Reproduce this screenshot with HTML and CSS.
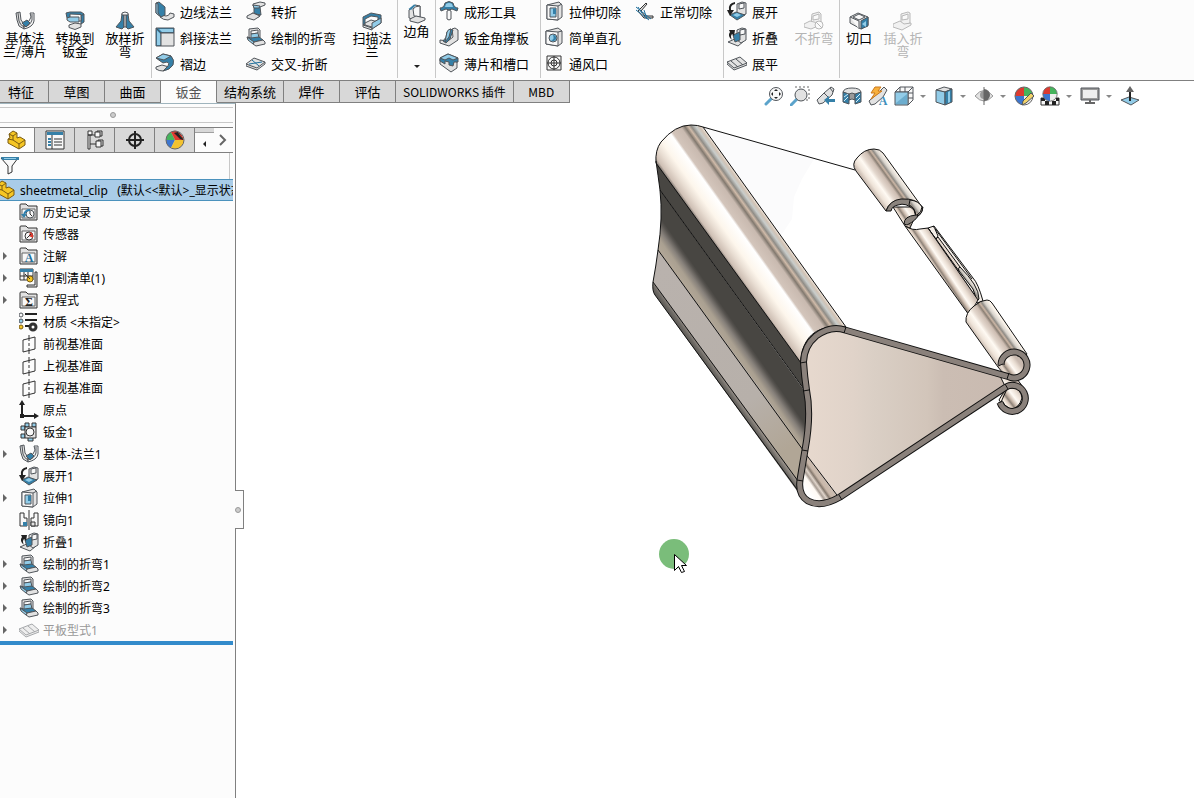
FILE: index.html
```html
<!doctype html>
<html lang="zh-CN">
<head>
    <meta charset="UTF-8">
    <title>sheetmetal_clip</title>
    <link rel="stylesheet" href="styles.css">
</head>
<body>
    <!-- icon sprite -->
    <svg class="sprite" aria-hidden="true">
        <symbol id="base" viewBox="0 0 20 20">
            <path class="o g" d="m1 2 4-1 1 8 3 4v5l-5-3-2-6z"/>
            <path class="o w" d="M15 2h4v8q-1 6-10 8v-5l5-3 2-4z"/>
            <path class="o n" d="m3 2 1 8q1 4 5 6 6-1 8-7V3"/>
            <path class="o b" d="m7 12 5-3 3 3-4 4z"/>
        </symbol>
        <symbol id="convert" viewBox="0 0 20 20">
            <path class="o b" d="m1 2 4-1h11l3 2v8l-3 2V6H5l-3 1z"/>
            <path class="o w" d="m5 3 11 .5V10H5zM16 5l3-2"/>
            <path class="o l" d="M5 6h9v5H5L2 9V7z"/>
            <path class="o g" d="m4 14 6-2 6 1v3l-6 2.500-6-2z"/>
        </symbol>
        <symbol id="loft" viewBox="0 0 20 20">
            <path class="o b" d="m7 3-1 7-5 6 6 2 2-2V3zM11 3h2l1 7 5 6-6 2-2-2z"/>
            <path class="o g" d="M9 3h2v13H9z"/>
            <path class="o w" d="m7 2 3-1 3 1v2H7z"/>
        </symbol>
        <symbol id="edge" viewBox="0 0 20 20">
            <path class="o g" d="m7 14 4 1q3 0 4-3l4 1v3l-6 3q-5 0-8-3z"/>
            <path class="o b" d="m1 2 3-1 6 5v8l-4 2-5-4z"/>
            <path class="o l" d="m1 2 2 1v9l3 4-5-4z"/>
        </symbol>
        <symbol id="miter" viewBox="0 0 20 20">
            <path class="o b" d="M1 1h18v5H6v13H1z"/>
            <path class="l" d="M2 3.500 5.500 7v11H2zM4 2h14v3H7z"/>
            <path class="o g" d="M6 6h13v13H6z"/>
            <path class="o n" d="m1 1 5 5"/>
        </symbol>
        <symbol id="hem" viewBox="0 0 20 20">
            <path class="o g" d="m1 14 6-2 7 2-6 4q-4 0-7-2z"/>
            <path class="o b" d="M1 5 8 1l8 2q4 4 2 9-3 5-10 6l5-5q2-3-1-4l-4 1z"/>
            <path class="o l" d="m1 5 7-4 8 2-7 4z"/>
        </symbol>
        <symbol id="jog" viewBox="0 0 20 20">
            <path class="o g" d="m7 3 7-2 5 1v2l-5 2-7-1z"/>
            <path class="o b" d="m8 5 6 1 1 8-7-1z"/>
            <path class="o l" d="m7 4 7 1-1 2H8zM6 12l8 2-1 2-7-2z"/>
            <path class="o g" d="m1 15 6-3 7 3-6 4-7-2z"/>
        </symbol>
        <symbol id="sketchbend" viewBox="0 0 20 20">
            <path class="o g" d="m3 2 9-1 2 2v8l-9 1-2-2z"/>
            <path class="o w" d="m5 4 7-1v3l-7 1z"/>
            <path class="o l" d="m5 7 7-1 1 5-8 1z"/>
            <path class="o b" d="m1 10 4 1 8-1 4 3-9 2z"/>
            <path class="o g" d="m8 15 9-2 2 2v2l-9 2-3-2z"/>
            <path class="o l" d="m1 10 7 5-1 2-5-4z"/>
        </symbol>
        <symbol id="cross" viewBox="0 0 20 20">
            <path class="o g" d="m0 11 8-6 11 4v2l-8 6-11-4z"/>
            <path class="o n" d="m0 11 11 4 8-6"/>
            <path class="sb n" d="m6 7 7 6M3 11l13-2"/>
        </symbol>
        <symbol id="swept" viewBox="0 0 20 20">
            <path class="o b" d="M1 6 9 2l10 2v8l-8 5-1-5 6-3V6L9 5 3 8v5L1 14z"/>
            <path class="o g" d="m3 12 6-3 7 2-6 5-7-2zM1 14l9 3v2l-9-3z"/>
            <path class="o l" d="m10 12 9-5v5l-9 6z"/>
        </symbol>
        <symbol id="corner" viewBox="0 0 20 20">
            <path class="o g" d="m2 6 6-5 5 1v11l-5 3-6-2z"/>
            <path class="o w" d="M6 5q2-3 7-3v11l-6-1z"/>
            <path class="b" d="M1.500 5 7 .5l2 .5-5 5z"/>
            <path class="o g" d="m3 15 6-3 9 2v2l-7 3-8-2z"/>
        </symbol>
        <symbol id="form" viewBox="0 0 20 20">
            <path class="o b" d="M1 7q4 0 5-5 4-3 8 0 1 5 5 5l-1 3-5-2-3 1-3-1-5 2z"/>
            <path class="l" d="M7 3q3-2 6 0l1 3H6z"/>
            <path class="o w" d="M8 10q2-2 4 0v8q-2 2-4 0z"/>
        </symbol>
        <symbol id="gusset" viewBox="0 0 20 20">
            <path class="o g" d="m13 2 3-1 3 2v10l-9 6-9-3v-3l8 1 5-4z"/>
            <path class="o b" d="M4 14q4-3 4-9l3-3 3 1-3 9-4 4z"/>
            <path class="o l" d="M8 5q1-3 4-3l-2 8-4 5z"/>
        </symbol>
        <symbol id="tabslot" viewBox="0 0 20 20">
            <path class="o g" d="M1 6v5l11 8 6-4V9L7 4z"/>
            <path class="o b" d="m1 5 8-4 10 4v4h-4l-1 4-4-1V9L6 8v3l-5-3z"/>
            <path class="o l" d="m1 5 8-4 10 4-5 2-4-2-4 2z"/>
        </symbol>
        <symbol id="extrude" viewBox="0 0 20 20">
            <path class="o g" d="m3 4 12-3 3 3v12l-4 3-11-1z"/>
            <path class="o w" d="m3 4 11 1v14L3 18zM14 5l4-2"/>
            <path class="o l" d="M6 7h6v9H6z"/>
            <path class="b" d="M9 7.500h3V13H9z"/>
        </symbol>
        <symbol id="hole" viewBox="0 0 20 20">
            <path class="o g" d="m2 4 12-3 4 3v12l-4 3-12-2z"/>
            <path class="o w" d="m2 4 12 1v14L2 17zM14 5l4-1"/>
            <circle class="o l" cx="9" cy="11" r="4"/>
            <path class="b" d="M9 8a3 3 0 1 1-2 5q4 0 2-5z"/>
        </symbol>
        <symbol id="vent" viewBox="0 0 20 20">
            <path class="k w" d="M3 3h14v14H3z"/>
            <circle class="k n" cx="10" cy="10" r="6"/>
            <circle class="k n" cx="10" cy="10" r="3"/>
            <path class="k n" d="M3 10h14M10 3v14"/>
        </symbol>
        <symbol id="normal" viewBox="0 0 20 20">
            <path class="k g" d="m11 2 1 1-6 7 4 5h8v2H9l-6-7z"/>
            <path class="sb n" d="m1 6 15 12M1 9l13 10M3 6l4 6M9 9l3 9"/>
        </symbol>
        <symbol id="unfold" viewBox="0 0 20 20">
            <path class="o g" d="m10 3 5-2 4 1v11l-5 2-4-3z"/>
            <path class="o w" d="m12 3 5-1v5l-5 1z"/>
            <path class="o b" d="m3 14 6-3 9 3-8 5z"/>
            <path class="l" d="m6 14 4-2 4 2-4 2z"/>
            <path class="f" d="M8 3Q3 4 4 9h3l-4 6-3-6h2Q1 2 8 1z"/>
        </symbol>
        <symbol id="fold" viewBox="0 0 20 20">
            <path class="o g" d="m1 15 9-4 7 3-6 5z"/>
            <path class="o g" d="m10 3 5-2 4 1v11l-5 3-4-3z"/>
            <path class="o b" d="m6 8 7-3v8l-5 2z"/>
            <path class="o w" d="m13 3 5-1v5l-5 1z"/>
            <path class="f" d="M2 3h6l-1 6-2-2q-2 2 0 6-5-4-2-8z"/>
        </symbol>
        <symbol id="flatten" viewBox="0 0 20 20">
            <path class="o g" d="m0 9 13-5 7 6v2L7 17l-7-6z"/>
            <path class="o n" d="m0 9 7 6 13-5M4 8l7 6M9 6l7 6"/>
        </symbol>
        <symbol id="nobend" viewBox="0 0 20 20">
            <path class="o g" d="m8 3 7-2 2 2v8l-4 3-6-1z"/>
            <path class="o w" d="m9 5 6-2v5l-6 1z"/>
            <path class="o g" d="m0 13 6-3 8 2v3l-7 3-7-2z"/>
            <circle class="o w" cx="15" cy="14" r="4"/>
            <path class="o n" d="m12 11 6 6"/>
        </symbol>
        <symbol id="rip" viewBox="0 0 20 20">
            <path class="o g" d="m1 6 8-4 10 4v8l-7 4-11-6z"/>
            <path class="o w" d="m4 6 6-3 6 3-6 3zM1 6l9 4v8"/>
            <path class="o b" d="m12 10 7-4v9l-7 3z"/>
            <path class="l" d="m13 13 4-3v6z"/>
        </symbol>
        <symbol id="insert" viewBox="0 0 20 20">
            <path class="o g" d="m8 3 7-2 2 1v10l-5 2-4-2z"/>
            <path class="o w" d="m9 5 6-2v5l-6 1z"/>
            <path class="o g" d="m0 13 7-3 4 3 7-1v2l-9 5-9-3z"/>
        </symbol>
        <symbol id="part" viewBox="0 0 20 20">
            <path class="gold" d="m2 4 4-3 4 2v5l3-1 5 3v5l-6 4L1 13V9l2-1z"/>
            <path class="goldline" d="m2 4 4 2 4-3M6 6v4l-5-1M6 10l6 4 6-4M12 14v5"/>
        </symbol>
        <symbol id="props" viewBox="0 0 20 20">
            <path class="k w" d="M1 1h18v18H1z"/>
            <path class="b" d="M2 2h16v3H2z"/>
            <path class="k n" d="M7 5v14M9 9h8M9 12h8M9 15h8"/>
            <path class="b" d="M3 8h3v2H3zM3 11h3v2H3zM3 14h3v2H3z"/>
        </symbol>
        <symbol id="config" viewBox="0 0 20 20">
            <path class="k w" d="M3 1h4v4H3zM3 5h2v14H3zM10 2h5v5h-5zM11 11h5v6h-5z"/>
            <path class="k n" d="M5 5h5M5 14h6M12 2V1h5v5h-2M13 11v-1h5v6h-2"/>
        </symbol>
        <symbol id="dim" viewBox="0 0 20 20">
            <circle class="k2 n" cx="10" cy="10" r="6"/>
            <path class="k2 n" d="M1 10h18M10 1v18"/>
        </symbol>
        <symbol id="ball" viewBox="0 0 20 20">
            <path class="red" d="M10 10V1a9 9 0 0 0-9 9z"/>
            <path class="green" d="M10 10V1a9 9 0 0 1 9 9z"/>
            <path class="blue" d="M10 10H1a9 9 0 0 0 9 9z"/>
            <path class="paper" d="M10 10h9a9 9 0 0 1-9 9z"/>
            <circle class="thin n" cx="10" cy="10" r="9"/>
        </symbol>
        <symbol id="appear" viewBox="0 0 20 20">
            <path class="green" d="M10 10 6 2a9 9 0 0 0-5 8z"/>
            <path class="red" d="M10 10 6 2q3-2 6-1l7 9z"/>
            <path class="f" d="m9 3 4-1q5 3 5 8l-3-1z"/>
            <path class="red" d="m13 3 5 6q0-4-5-6z"/>
            <path class="blue" d="M10 10H1a9 9 0 0 0 5 8z"/>
            <path class="yellow" d="M10 10h9a9 9 0 0 1-13 8z"/>
            <circle class="thin n" cx="10" cy="10" r="9"/>
        </symbol>
        <symbol id="funnel" viewBox="0 0 20 20">
            <path class="k w" d="m1 2 7 8v8l4-2v-6l6-8z"/>
            <path class="b" d="M1 1h18v3H2z"/>
            <path class="l" d="M4 2h12v1H4z"/>
        </symbol>
        <symbol id="folder" viewBox="0 0 20 20">
            <path class="k g" d="M1 3q0-1 1-1h5l2 2h9v14H1z"/>
            <path class="thin w" d="M3 7h13v9H3z"/>
        </symbol>
        <symbol id="history" viewBox="0 0 20 20">
            <use href="#folder"/>
            <circle class="o w" cx="11" cy="12" r="4"/>
            <path class="k n" d="M11 9v3l2 2"/>
            <path class="sb2 n" d="M5 13q1-5 6-5"/>
            <path class="b" d="M2 12h6l-3 4z"/>
        </symbol>
        <symbol id="sensor" viewBox="0 0 20 20">
            <use href="#folder"/>
            <circle class="k w" cx="10" cy="12" r="4"/>
            <path class="red" d="m10 12 1-4q4 1 3 6z"/>
            <path class="k n" d="m8 14 4-4"/>
        </symbol>
        <symbol id="cutlist" viewBox="0 0 20 20">
            <path class="k w" d="M1 1h13v11H1z"/>
            <path class="b" d="M1 1h13v3H1z"/>
            <path class="k n" d="M1 8h13M5 4v8M9 4v8"/>
            <path class="k g" d="M16 4h2v15H8v-2h8z"/>
            <circle class="gold" cx="11" cy="11" r="3"/>
            <path class="k n" d="m6 6 5 5"/>
        </symbol>
        <symbol id="material" viewBox="0 0 20 20">
            <circle class="o w" cx="2" cy="3" r="2"/>
            <circle class="o l" cx="2" cy="9" r="2"/>
            <circle class="gold" cx="2" cy="15" r="2"/>
            <path class="k2 n" d="M6 2h12M6 8h12M6 14h4"/>
            <circle class="gear" cx="14" cy="15" r="3"/>
        </symbol>
        <symbol id="plane" viewBox="0 0 20 20">
            <path class="k n" d="m4 6 12-3v12L4 18zM10 1v6M10 9v3M10 14v6"/>
        </symbol>
        <symbol id="origin" viewBox="0 0 20 20">
            <path class="k2 n" d="M3 3v13h13"/>
            <path class="f" d="m3 0 3 5H0zM20 16l-5-3v6zM1 14h4v4H1z"/>
        </symbol>
        <symbol id="sheet" viewBox="0 0 20 20">
            <path class="k l" d="M2 4h4v4H2zM6 1h4v4H6zM13 1h4v4h-4zM2 12h4v4H2zM9 15h5v4H9z"/>
            <path class="k g" d="M6 5h11v11H6z"/>
            <circle class="k w" cx="11" cy="10" r="4"/>
        </symbol>
        <symbol id="mirror" viewBox="0 0 20 20">
            <path class="k w" d="M1 3h4v5h3v8H1zM19 3h-4v5h-3v8h7z"/>
            <path class="b" d="M4 12h4v4H4z"/>
            <path class="k g" d="M12 12h4v4h-4z"/>
            <path class="k n" d="M10 0v20"/>
        </symbol>
        <symbol id="zoomfit" viewBox="0 0 20 20">
            <path class="handle" d="m2 18 6-6"/>
            <circle class="o w" cx="12" cy="8" r="6.500"/>
            <path class="f" d="m12 3 2 2h-4zM12 13l2-2h-4zM7 8l2-2v4zM17 8l-2-2v4z"/>
        </symbol>
        <symbol id="zoomarea" viewBox="0 0 20 20">
            <path class="dash n" d="M5 1h14v13H7"/>
            <path class="handle" d="m1 19 6-6"/>
            <circle class="o g" cx="11" cy="9" r="6"/>
        </symbol>
        <symbol id="previous" viewBox="0 0 20 20">
            <path class="o g" d="m1 14 7-7 7-6 3 2-2 6-9 8-4 1z"/>
            <path class="o n" d="m8 7 5 5M14 2l3 4"/>
            <path class="b" d="m8 14 5-4v3h6v3h-6v3z"/>
        </symbol>
        <symbol id="section" viewBox="0 0 20 20">
            <path class="o g" d="M1 6q1-4 9-4 8 0 9 4l-6 3q-3-2-6 0z"/>
            <path class="o gr" d="M7 8q3-2 6 0v6q-3-2-6 0z"/>
            <path class="o b" d="m1 6 6 2v10l-6-2zM13 8l6-2v10l-6 2z"/>
            <path class="hatch n" d="m2 11 4-3M2 15l4-4M14 12l4-4M14 16l4-4"/>
        </symbol>
        <symbol id="annot" viewBox="0 0 20 20">
            <path class="o g" d="m1 15 10-9 5-5 3 3-4 7-8 7-4 1z"/>
            <path class="bolt" d="m7 1 6 0-3 4h4l-11 8 4-6H3z"/>
        </symbol>
        <symbol id="orient" viewBox="0 0 20 20">
            <path class="o w" d="m6 1h13v13l-5 5V6H1z"/>
            <path class="o n" d="M6 1v5M11 1v5M19 7h-5M14 6l5-5M14 12h5"/>
            <path class="o l" d="M1 6h13v13H1z"/>
            <path class="b" d="M2 17 13 8v10H2z" opacity=".4"/>
        </symbol>
        <symbol id="display" viewBox="0 0 20 20">
            <path class="o g" d="m2 4 8-3 8 2-7 3z"/>
            <path class="o l" d="m2 4 9 2v13l-9-3z"/>
            <path class="o b" d="m11 6 7-3v13l-7 3z"/>
            <path class="l" d="m14 6 2-1v11l-2 1z"/>
        </symbol>
        <symbol id="eye" viewBox="0 0 20 20">
            <path class="eye" d="M1 10q9-11 18 0-9 10-18 0z"/>
            <circle class="gr" cx="10" cy="9" r="4"/>
            <path class="dk" d="M10 3a6 6 0 0 1 0 12z"/>
            <path class="thin" d="M10 1v18"/>
        </symbol>
        <symbol id="pencilball" viewBox="0 0 20 20">
            <use href="#ball"/>
            <path class="o pencil" d="m9 15 8-8 3 3-8 7-4 2z"/>
        </symbol>
        <symbol id="scene" viewBox="0 0 20 20">
            <path class="k w" d="M1 12h18v7H1z"/>
            <path class="f" d="M1 12h4v3H1zM5 15h4v4H5zM9 12h3v3H9zM12 15h4v4h-4zM16 12h3v3h-3z"/>
            <g transform="translate(2) scale(.8)"><use href="#ball" width="20" height="20"/></g>
        </symbol>
        <symbol id="monitor" viewBox="0 0 20 20">
            <path class="o gr" d="M1 2h18v12H1z"/>
            <path class="paper" d="M3 4h14v8H3z"/>
            <path class="dk" d="M9 14h2v2h4v2H5v-2h4z"/>
        </symbol>
        <symbol id="triad" viewBox="0 0 20 20">
            <path class="o l" d="m1 14 8-3 10 3-8 5z"/>
            <path class="k2 n" d="M10 15V4"/>
            <path class="dk" d="m10 0 4 6H6z"/>
        </symbol>
    </svg>

    <header class="ribbon">
        <div class="group first">
            <button class="big"><svg class="icon"><use href="#base"/></svg>基体法<br>兰/薄片</button>
            <button class="big"><svg class="icon"><use href="#convert"/></svg>转换到<br>钣金</button>
            <button class="big"><svg class="icon"><use href="#loft"/></svg>放样折<br>弯</button>
        </div>
        <div class="group">
            <div class="column">
                <button class="small"><svg class="icon"><use href="#edge"/></svg>边线法兰</button>
                <button class="small"><svg class="icon"><use href="#miter"/></svg>斜接法兰</button>
                <button class="small"><svg class="icon"><use href="#hem"/></svg>褶边</button>
            </div>
            <div class="column">
                <button class="small"><svg class="icon"><use href="#jog"/></svg>转折</button>
                <button class="small"><svg class="icon"><use href="#sketchbend"/></svg>绘制的折弯</button>
                <button class="small"><svg class="icon"><use href="#cross"/></svg>交叉-折断</button>
            </div>
            <button class="big"><svg class="icon"><use href="#swept"/></svg>扫描法<br>兰</button>
        </div>
        <div class="group">
            <button class="big menu"><svg class="icon"><use href="#corner"/></svg>边角<span class="caret"></span></button>
        </div>
        <div class="group">
            <div class="column">
                <button class="small"><svg class="icon"><use href="#form"/></svg>成形工具</button>
                <button class="small"><svg class="icon"><use href="#gusset"/></svg>钣金角撑板</button>
                <button class="small"><svg class="icon"><use href="#tabslot"/></svg>薄片和槽口</button>
            </div>
        </div>
        <div class="group">
            <div class="column">
                <button class="small"><svg class="icon"><use href="#extrude"/></svg>拉伸切除</button>
                <button class="small"><svg class="icon"><use href="#hole"/></svg>简单直孔</button>
                <button class="small"><svg class="icon"><use href="#vent"/></svg>通风口</button>
            </div>
            <div class="column">
                <button class="small"><svg class="icon"><use href="#normal"/></svg>正常切除</button>
            </div>
        </div>
        <div class="group">
            <div class="column">
                <button class="small"><svg class="icon"><use href="#unfold"/></svg>展开</button>
                <button class="small"><svg class="icon"><use href="#fold"/></svg>折叠</button>
                <button class="small"><svg class="icon"><use href="#flatten"/></svg>展平</button>
            </div>
            <button class="big" disabled><svg class="icon"><use href="#nobend"/></svg>不折弯</button>
        </div>
        <div class="group last">
            <button class="big narrow"><svg class="icon"><use href="#rip"/></svg>切口</button>
            <button class="big" disabled><svg class="icon"><use href="#insert"/></svg>插入折<br>弯</button>
        </div>
    </header>

    <div class="tabrow">
        <nav class="tabs">
            <button class="tab first">特征</button>
            <button class="tab">草图</button>
            <button class="tab">曲面</button>
            <button class="tab active">钣金</button>
            <button class="tab tight">结构系统</button>
            <button class="tab">焊件</button>
            <button class="tab">评估</button>
            <button class="tab tight latin">SOLIDWORKS 插件</button>
            <button class="tab latin">MBD</button>
        </nav>
        <div class="viewbar">
            <button aria-label="整屏显示全图"><svg class="icon"><use href="#zoomfit"/></svg></button>
            <button aria-label="局部放大"><svg class="icon"><use href="#zoomarea"/></svg></button>
            <button aria-label="上一视图"><svg class="icon"><use href="#previous"/></svg></button>
            <button aria-label="剖面视图"><svg class="icon"><use href="#section"/></svg></button>
            <button aria-label="动态注解视图"><svg class="icon" viewBox="0 0 20 20"><use href="#annot"/><text class="glyph-v" x="15" y="19">A</text></svg></button>
            <button aria-label="视图定向"><svg class="icon"><use href="#orient"/></svg></button>
            <span class="drop"></span>
            <button aria-label="显示样式"><svg class="icon"><use href="#display"/></svg></button>
            <span class="drop"></span>
            <button aria-label="隐藏/显示项目"><svg class="icon"><use href="#eye"/></svg></button>
            <span class="drop"></span>
            <button aria-label="编辑外观"><svg class="icon"><use href="#pencilball"/></svg></button>
            <button aria-label="应用布景"><svg class="icon"><use href="#scene"/></svg></button>
            <span class="drop"></span>
            <button aria-label="视图设定"><svg class="icon"><use href="#monitor"/></svg></button>
            <span class="drop"></span>
            <button aria-label="三重轴"><svg class="icon"><use href="#triad"/></svg></button>
        </div>
    </div>

    <main class="workspace">
        <aside class="sidebar">
            <div class="grip"><span class="dot"></span></div>
            <div class="paneltabs">
                <button class="active" aria-label="设计树"><svg class="icon"><use href="#part"/></svg></button>
                <button aria-label="属性"><svg class="icon"><use href="#props"/></svg></button>
                <button aria-label="配置"><svg class="icon"><use href="#config"/></svg></button>
                <button aria-label="尺寸"><svg class="icon"><use href="#dim"/></svg></button>
                <button aria-label="外观"><svg class="icon"><use href="#appear"/></svg></button>
                <div class="scroller">
                    <button class="prev" aria-label="向左"><svg viewBox="0 0 16 16"><path class="f" d="M10 5v6L7 8z"/></svg></button>
                    <button class="next" aria-label="更多"><svg viewBox="0 0 16 16"><path class="chevron" d="m5 3 5 5-5 5"/></svg></button>
                </div>
            </div>
            <label class="filter"><svg class="icon"><use href="#funnel"/></svg><input type="text" aria-label="过滤"></label>
            <ul class="tree">
                <li class="root"><svg class="icon"><use href="#part"/></svg><span>sheetmetal_clip&nbsp;&nbsp; (默认&lt;&lt;默认&gt;_显示状态 1&gt;)</span></li>
                <li><svg class="icon"><use href="#history"/></svg>历史记录</li>
                <li><svg class="icon"><use href="#sensor"/></svg>传感器</li>
                <li><button class="toggle" aria-label="展开项"></button><svg class="icon" viewBox="0 0 20 20"><use href="#folder"/><text class="glyph-a" x="10" y="16">A</text></svg>注解</li>
                <li><button class="toggle" aria-label="展开项"></button><svg class="icon"><use href="#cutlist"/></svg>切割清单(1)</li>
                <li><button class="toggle" aria-label="展开项"></button><svg class="icon" viewBox="0 0 20 20"><use href="#folder"/><text class="glyph-s" x="10" y="16">Σ</text></svg>方程式</li>
                <li><svg class="icon"><use href="#material"/></svg>材质 &lt;未指定&gt;</li>
                <li><svg class="icon"><use href="#plane"/></svg>前视基准面</li>
                <li><svg class="icon"><use href="#plane"/></svg>上视基准面</li>
                <li><svg class="icon"><use href="#plane"/></svg>右视基准面</li>
                <li><svg class="icon"><use href="#origin"/></svg>原点</li>
                <li><svg class="icon"><use href="#sheet"/></svg>钣金1</li>
                <li><button class="toggle" aria-label="展开项"></button><svg class="icon"><use href="#base"/></svg>基体-法兰1</li>
                <li><svg class="icon"><use href="#unfold"/></svg>展开1</li>
                <li><button class="toggle" aria-label="展开项"></button><svg class="icon"><use href="#extrude"/></svg>拉伸1</li>
                <li><svg class="icon"><use href="#mirror"/></svg>镜向1</li>
                <li><svg class="icon"><use href="#fold"/></svg>折叠1</li>
                <li><button class="toggle" aria-label="展开项"></button><svg class="icon"><use href="#sketchbend"/></svg>绘制的折弯1</li>
                <li><button class="toggle" aria-label="展开项"></button><svg class="icon"><use href="#sketchbend"/></svg>绘制的折弯2</li>
                <li><button class="toggle" aria-label="展开项"></button><svg class="icon"><use href="#sketchbend"/></svg>绘制的折弯3</li>
                <li class="off"><button class="toggle" aria-label="展开项"></button><svg class="icon"><use href="#flatten"/></svg>平板型式1</li>
            </ul>
            <div class="rollback"></div>
            <button class="collapse" aria-label="折叠面板"><span class="dot"></span></button>
        </aside>

        <section class="viewport">
            <svg class="model" viewBox="236 103 958 695">
                <defs>
                    <linearGradient id="metal" gradientUnits="userSpaceOnUse" x1="656" y1="163" x2="705" y2="128">
                        <stop offset="0" stop-color="#77706a"/>
                        <stop offset=".05" stop-color="#cfc0b5"/>
                        <stop offset=".16" stop-color="#e8ddd2"/>
                        <stop offset=".28" stop-color="#fdf6ec"/>
                        <stop offset=".48" stop-color="#ffffff"/>
                        <stop offset=".52" stop-color="#d3c5bb"/>
                        <stop offset=".68" stop-color="#c9bab0"/>
                        <stop offset=".74" stop-color="#82796f"/>
                        <stop offset=".79" stop-color="#d0bba9"/>
                        <stop offset=".83" stop-color="#8f8c86"/>
                        <stop offset=".89" stop-color="#c8ccca"/>
                        <stop offset=".94" stop-color="#d1c2b4"/>
                        <stop offset="1" stop-color="#fff8ef"/>
                    </linearGradient>
                    <linearGradient id="pin" gradientUnits="userSpaceOnUse" x1="855" y1="167" x2="880" y2="149">
                        <stop offset="0" stop-color="#cdbfb4"/>
                        <stop offset=".12" stop-color="#eee3d8"/>
                        <stop offset=".3" stop-color="#fffaf3"/>
                        <stop offset=".42" stop-color="#e3d7cd"/>
                        <stop offset=".58" stop-color="#cdbdb2"/>
                        <stop offset=".66" stop-color="#8b8075"/>
                        <stop offset=".72" stop-color="#cbb6a5"/>
                        <stop offset=".78" stop-color="#8f8b85"/>
                        <stop offset=".86" stop-color="#d8d3cc"/>
                        <stop offset="1" stop-color="#fff8ef"/>
                    </linearGradient>
                    <linearGradient id="pin2" href="#pin" x1="966" y1="322" x2="991" y2="304"/>
                    <linearGradient id="rod" gradientUnits="userSpaceOnUse" x1="905" y1="226" x2="920" y2="216">
                        <stop offset="0" stop-color="#fff6ea"/>
                        <stop offset=".15" stop-color="#d9c9bc"/>
                        <stop offset=".25" stop-color="#8d8278"/>
                        <stop offset=".36" stop-color="#c9b8aa"/>
                        <stop offset=".55" stop-color="#fffaf4"/>
                        <stop offset=".8" stop-color="#e9ddd2"/>
                        <stop offset="1" stop-color="#c9bab0"/>
                    </linearGradient>
                    <linearGradient id="rod2" href="#rod" x1="1003" y1="372" x2="1018" y2="361"/>
                    <linearGradient id="rod3" href="#rod" x1="1004" y1="402" x2="1020" y2="390"/>
                    <linearGradient id="inner" gradientUnits="userSpaceOnUse" x1="803" y1="486" x2="823" y2="472">
                        <stop offset="0" stop-color="#ffffff"/>
                        <stop offset=".3" stop-color="#fffaf4"/>
                        <stop offset=".4" stop-color="#a79c93"/>
                        <stop offset=".5" stop-color="#e0d5cb"/>
                        <stop offset=".6" stop-color="#85796e"/>
                        <stop offset=".7" stop-color="#c9b8aa"/>
                        <stop offset="1" stop-color="#cfc2b8"/>
                    </linearGradient>
                    <linearGradient id="bend" gradientUnits="userSpaceOnUse" x1="658" y1="250" x2="688" y2="229">
                        <stop offset="0" stop-color="#b3a898"/>
                        <stop offset=".2" stop-color="#aaa091"/>
                        <stop offset=".35" stop-color="#86807a"/>
                        <stop offset=".5" stop-color="#55524e"/>
                        <stop offset=".56" stop-color="#484642"/>
                    </linearGradient>
                    <linearGradient id="plate" gradientUnits="userSpaceOnUse" x1="660" y1="270" x2="800" y2="470">
                        <stop offset="0" stop-color="#b9b2ad"/>
                        <stop offset=".65" stop-color="#b7b0aa"/>
                        <stop offset=".9" stop-color="#b1a696"/>
                    </linearGradient>
                    <linearGradient id="foot" gradientUnits="userSpaceOnUse" x1="653" y1="293" x2="660" y2="288">
                        <stop offset="0" stop-color="#55534f"/>
                        <stop offset=".5" stop-color="#6f6b66"/>
                        <stop offset="1" stop-color="#a39b93"/>
                    </linearGradient>
                    <linearGradient id="face" x1="0" y1="0" x2="1" y2="0">
                        <stop offset="0" stop-color="#e7d9ce"/>
                        <stop offset=".24" stop-color="#e0d3c9"/>
                        <stop offset=".34" stop-color="#dacfc5"/>
                        <stop offset=".6" stop-color="#d2c5ba"/>
                        <stop offset=".68" stop-color="#cbbdb3"/>
                        <stop offset="1" stop-color="#c9bab0"/>
                    </linearGradient>
                </defs>

                <!-- top plate -->
                <path fill="#fbfbfc" d="m704 127 110 32-12 20-8 18-2 22-12 18z"/>
                <path class="edge n" d="m703 127 152 43"/>

                <!-- left bends -->
                <path fill="#484642" d="M656 161q2 14 4 29l146 202-3-30z"/>
                <path fill="url(#bend)" d="M660 190q3 28-2 60l147 205 4-58z"/>
                <path fill="url(#plate)" d="M658 250q-2 16-5 32l146 201 6-33z"/>
                <path fill="url(#foot)" d="M653 282q-1 9 2 13l145 200-2-15z"/>
                <path class="edge n" d="m660 190 146 202M658 250l145 200M653 282l145 199M655 295l144 197"/>
                <path class="edge" fill="url(#metal)" d="M656 163q-1-13 5-21 14-17 30-17 7 0 12 2l143 200q-30-3-40 15-5 9-5 21z"/>
                <path class="edge n" d="M656 161q2 14 4 29 3 28-2 60-2 16-5 32-1 9 2 13"/>

                <!-- end face -->
                <path fill="url(#face)" d="m845 330 164 47v10L840 498 805 453l4-42-5-49q1-28 41-32z"/>
                <path class="edge" fill="url(#inner)" d="m805 453 35 46q-20 8-31 3-9-5-9-22z"/>

                <!-- hinge, back pin -->
                <path class="edge" fill="url(#rod)" d="M893 207h30q-1 8-9 12l-4 9-5-2z"/>
                <path class="edge" fill="url(#pin)" d="M886 211 856 171q-5-7 1-13 7-9 17-9 6 0 9 4l39 54q-10-9-22-7-11 1-14 11z"/>
                <path class="edge band" d="M886 211q4-11 15-12 16-1 21 8 2 6-6 10l-2-7q-8-8-16-5-6 1-7 6z"/>
                <path class="edge" fill="url(#pin)" d="m910 200-1 5q6 2 7 11 6-4 6-9-3-6-12-7z"/>
                <path class="edge band" d="M904 224q0-8 12-9h2q-1 5-11 10z"/>

                <!-- hinge, middle -->
                <path class="edge" fill="#f4eee8" d="m928 228 6-2 39 52q5 5 10 23l-6 2-2-7z"/>
                <path class="edge" fill="#e6d9ce" d="m936 239 2-2 22 30-1 4z"/>
                <path class="edge" fill="url(#pin2)" d="M959 271q-2-3 1-4 9 9 14 17 5 8 5 15l-2 2-4-12z"/>
                <path class="edge" fill="url(#rod)" d="M905 226q8 5 15 3l8-1 50 72-9 15z"/>
                <path class="edge n" d="m928 228 8 11 2-3-3-7M933 226l39 53"/>

                <!-- hinge, front pin -->
                <path class="edge" fill="url(#pin2)" d="M966 322q-1-9 8-16 7-6 13-6 3 0 5 3l35 51-20 24-9-11z"/>
                <circle fill="url(#rod2)" cx="1014" cy="365" r="12"/>
                <path class="edge" fill="url(#rod3)" d="m1000 376 17 3 6 8-8 20-10 1-6-8 7-12z"/>
                <path class="edge" fill="url(#rod3)" d="m1001 402 9 7q9 0 12-11-1-10-10-10l-5 1z"/>

                <!-- sheet thickness -->
                <path class="rim" d="M1001 365a13 13 0 1 1 7 11.500L845 330q-14-5-29 6-12 10-12.500 26 1 15 3 28 5 25-1.500 60l-5 30q-2 15 8 21 13 7 32-4l166-110a13 13 0 1 1-6 15.500"/>
                <path class="fillrim" d="M1001 365a13 13 0 1 1 7 11.500L845 330q-14-5-29 6-12 10-12.500 26 1 15 3 28 5 25-1.500 60l-5 30q-2 15 8 21 13 7 32-4l166-110a13 13 0 1 1-6 15.500"/>
                <path class="edge n" d="m846 327-2 6M800 363l6-1M803 391l6-1M802 450l6 1M797 480l6 1M839 495l3 5M1009 373l-2 6M1005 384l3 5M998 366l5-2M998 403l5-2"/>

                <!-- pointer -->
                <circle fill="#7abd7a" cx="674" cy="554" r="15"/>
                <path fill="#fff" stroke="#000" d="M674.500 554.500v16l4-4 3 6 3-1-3-6h5z"/>
            </svg>
        </section>
    </main>
</body>
</html>
```
FILE: styles.css
```css
* {
    box-sizing: border-box;
}

body {
    margin: 0;
    min-height: 100vh;
    display: flex;
    flex-direction: column;
    background-color: #ffffff;
    color: #000000;
    font-family: "Noto Sans CJK SC", sans-serif;
    font-size: 13px;
    line-height: 13px;
}

button {
    margin: 0;
    padding: 0;
    border: 0;
    background: none;
    color: inherit;
    font: inherit;
}

.sprite {
    position: absolute;
    width: 0;
    height: 0;
}

.icon {
    display: block;
    width: 20px;
    height: 20px;
    flex: none;
}

/* icon paints */
.o { stroke: #50555a; stroke-linejoin: round; }
.k { stroke: #333333; stroke-linejoin: round; }
.k2 { stroke: #222222; stroke-width: 2; }
.sb { stroke: #1f6f9c; }
.sb2 { stroke: #2f7fae; stroke-width: 2; }
.thin { stroke: #666666; }
.g { fill: #e2e2e2; }
.w { fill: #f8f8f8; }
.b { fill: #3580a8; }
.l { fill: #92cce8; }
.f { fill: #222222; }
.gr { fill: #9a9a9a; }
.dk { fill: #666666; }
.red { fill: #dc3b30; }
.green { fill: #45b45c; }
.blue { fill: #3d76cf; }
.yellow { fill: #f2c230; }
.paper { fill: #eeeeee; }
.pencil { fill: #f3d36a; }
.gold { fill: #f5c624; stroke: #7a5b12; stroke-linejoin: round; }
.goldline { fill: none; stroke: #7a5b12; }
.bolt { fill: #f8b03c; stroke: #c9781d; }
.handle { fill: none; stroke: #5ba3cb; stroke-width: 3; stroke-linecap: round; }
.dash { stroke: #666666; stroke-dasharray: 2 2; }
.hatch { stroke: #d6edf8; }
.eye { fill: #e2e2e2; stroke: #999999; }
.gear { fill: #ffffff; stroke: #333333; stroke-width: 3; }
.chevron { fill: none; stroke: #666666; stroke-width: 2; }
.n { fill: none; }

.glyph-a,
.glyph-s,
.glyph-v {
    font-family: "Liberation Serif", serif;
    font-size: 12px;
    font-weight: bold;
    text-anchor: middle;
}

.glyph-a {
    fill: #1f6f9c;
}

.glyph-s {
    fill: #222222;
}

.glyph-v {
    fill: #3f8fbc;
}

/* ribbon */
.ribbon {
    display: flex;
    height: 81px;
    background-color: #fcfcfc;
    border-bottom: 1px solid #808080;
}

.group {
    display: flex;
    height: 78px;
    border-right: 1px solid #c8c8c8;
}

.group.first {
    padding-right: 1px;
}

.group.last {
    border-right: 0;
}

.column {
    margin-top: -2px;
    padding: 0 11px 0 3px;
}

.small {
    display: flex;
    align-items: center;
    gap: 5px;
    height: 26px;
    white-space: nowrap;
}

.big {
    display: flex;
    flex-direction: column;
    align-items: center;
    width: 50px;
    padding-top: 11px;
    white-space: nowrap;
}

.big.menu {
    width: 37px;
    padding-top: 4px;
}

.big.narrow {
    width: 38px;
}

.big:disabled {
    color: #b4b4b4;
}

.big:disabled .icon {
    opacity: .4;
    filter: grayscale(1);
}

.caret {
    margin-top: 28px;
    border: 3px solid transparent;
    border-top-color: #222222;
    border-bottom: 0;
}

/* tabs */
.tabrow {
    display: flex;
    justify-content: space-between;
    align-items: flex-start;
    height: 22px;
}

.tabs {
    display: flex;
}

.tab {
    height: 22px;
    min-width: 56px;
    padding: 0 8px;
    border-right: 1px solid #808080;
    border-bottom: 1px solid #808080;
    background-color: #d8d8d8;
    white-space: nowrap;
}

.tab.first {
    min-width: 49px;
    padding: 0 14px 0 8px;
}

.tab.tight {
    padding: 0 7px;
}

.tab.latin {
    font-size: 12px;
}

.tab.active {
    background-color: #fcfcfc;
    border-bottom-color: #fcfcfc;
    color: #555555;
}

.viewbar {
    display: flex;
    align-items: center;
    gap: 6px;
    margin-top: 5px;
    padding-right: 54px;
}

.drop {
    margin-right: 2px;
    border: 3px solid transparent;
    border-top-color: #888888;
    border-bottom: 0;
}

/* workspace */
.workspace {
    flex: 1;
    display: flex;
}

.sidebar {
    position: relative;
    flex: none;
    width: 236px;
    padding-right: 2px;
    background-color: #fcfcfc;
    border-top: 1px solid #9fb4bd;
    border-right: 1px solid #808080;
    font-family: "Noto Sans", "Noto Sans CJK SC", sans-serif;
    font-size: 12px;
}

.dot {
    width: 6px;
    height: 6px;
    border: 1px solid #999999;
    border-radius: 50%;
    background-color: #cccccc;
}

.grip {
    display: flex;
    align-items: center;
    justify-content: center;
    height: 16px;
    margin: 3px 0 4px;
    padding-right: 8px;
    border-top: 1px solid #c8c8c8;
    border-bottom: 1px solid #c8c8c8;
}

.paneltabs {
    display: flex;
    height: 26px;
    border-top: 1px solid #808080;
    border-bottom: 1px solid #808080;
}

.paneltabs > button {
    display: flex;
    align-items: center;
    justify-content: center;
    flex: none;
    width: 40px;
    border-right: 1px solid #808080;
    background-color: #d8d8d8;
}

.paneltabs > .active {
    width: 35px;
    background-color: #fcfcfc;
}

.scroller {
    flex: 1;
    display: flex;
    min-width: 0;
    padding-top: 4px;
    background-color: #d8d8d8;
}

.scroller button {
    flex: 1;
    min-width: 0;
    padding: 3px 1px;
    background-color: #fcfcfc;
}

.scroller .prev {
    border-top: 1px solid #a0a0a0;
}

.scroller .next {
    margin-top: -4px;
}

.scroller svg {
    display: block;
    width: 16px;
    height: 16px;
}

.filter {
    display: flex;
    align-items: center;
    height: 26px;
    margin-right: 3px;
    border-right: 1px solid #c8c8c8;
}

.filter input {
    flex: 1;
    min-width: 0;
    border: 0;
    outline: 0;
    background: none;
    font: inherit;
}

.tree {
    margin: 0;
    padding: 0;
    list-style: none;
}

.tree li {
    display: flex;
    align-items: center;
    gap: 4px;
    height: 22px;
    padding-left: 19px;
    white-space: nowrap;
    overflow: hidden;
}

.tree .root {
    padding-left: 0;
    background-color: #a9cce8;
    border-top: 1px solid #4b92bd;
    border-bottom: 1px solid #4b92bd;
}

.root .icon {
    margin-left: -4px;
}

.tree .off {
    color: #999999;
}

.off .icon {
    opacity: .5;
}

.toggle {
    margin: 0 8px 0 -16px;
    border: 4px solid transparent;
    border-left-color: #666666;
    border-right: 0;
}

.rollback {
    height: 4px;
    background-color: #338bcb;
}

.collapse {
    position: absolute;
    top: 386px;
    left: 235px;
    display: flex;
    align-items: center;
    width: 9px;
    height: 39px;
    border: 1px solid #808080;
    border-left: 0;
    background-color: #fcfcfc;
}

.viewport {
    flex: 1;
    min-width: 0;
}

/* model */
.model {
    display: block;
    width: 100%;
    height: 100%;
}

.edge {
    stroke: #111111;
    stroke-width: 1;
    stroke-linejoin: round;
}

.band {
    fill: #8b847e;
}

.rim {
    fill: none;
    stroke: #111111;
    stroke-width: 7;
}

.fillrim {
    fill: none;
    stroke: #8a817b;
    stroke-width: 5;
}
```
